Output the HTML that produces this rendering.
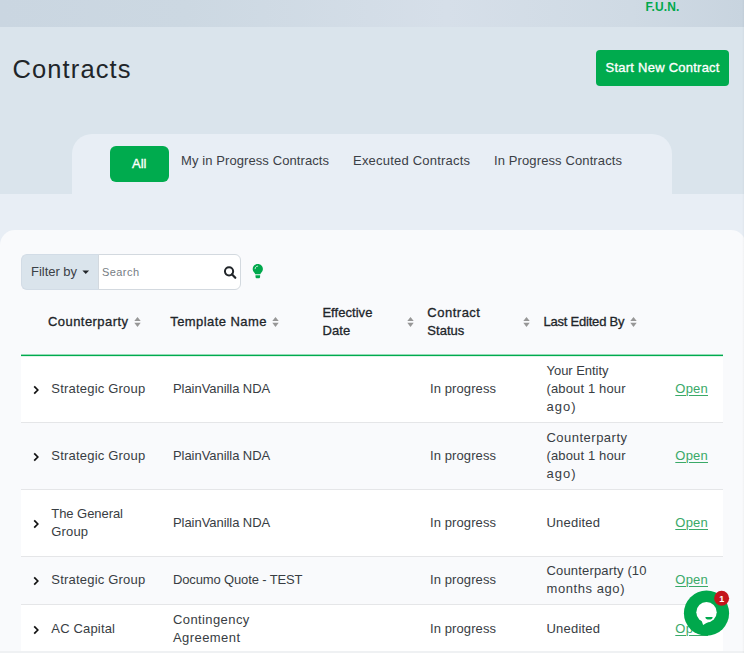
<!DOCTYPE html>
<html>
<head>
<meta charset="utf-8">
<style>
*{box-sizing:border-box;margin:0;padding:0}
html,body{width:744px;height:653px;overflow:hidden}
body{font-family:"Liberation Sans",sans-serif;background:#e8eef5;color:#212529;position:relative}
.a{position:absolute}
.t{position:absolute;white-space:nowrap;line-height:18px;font-size:13px}
.topbar{left:0;top:0;width:744px;height:27px;background:linear-gradient(90deg,#cad6e1 0%,#ccd8e2 25%,#d6dfe9 60%,#cfdae4 85%,#c8d4df 100%)}
.hero{left:0;top:27px;width:744px;height:167px;background:#dae4ec}
.tabs{left:72px;top:134px;width:600px;height:60px;background:#e8eef5;border-radius:20px 20px 0 0}
.gbtn{background:#00ab4e}
.card{left:0;top:230px;width:746px;height:430px;background:#f9fafc;border-radius:15px 15px 0 0}
.filter{left:98px;top:254px;width:143px;height:36px;border:1px solid #d3d9df;border-radius:0 6px 6px 0;background:#fff}
.filterby{left:21px;top:254px;width:78px;height:36px;background:#dae4ec;border:1px solid #d2dce6;border-right-color:#d3d9df;border-radius:6px 0 0 6px}
.gline{left:21px;top:354px;width:702px;height:3px;background:linear-gradient(180deg,rgba(0,171,78,.4) 0,rgba(0,171,78,.4) 1px,#00ab4e 1px,#00ab4e 2px,rgba(0,171,78,.12) 2px,rgba(0,171,78,.12) 3px);z-index:2}
.row{left:21px;width:702px}
.rb{left:21px;width:702px;height:1px;background:#e5e6e8}
.td{color:#383d43}
.th{color:#212529;-webkit-text-stroke:.3px #212529}
.open{color:#3aa968;text-decoration:underline;text-decoration-thickness:1px;text-underline-offset:2px}
.title{font-size:25.5px;line-height:34px;color:#212529}
.btn{color:#fff;-webkit-text-stroke:.32px #fff}
.tab{color:#3b4046}
.fb{color:#3b4046}
.search{font-size:11px;line-height:14px;color:#767d84}
.fun{color:#00a84c;font-weight:700;font-size:12px}
.badge{z-index:6;font-size:9px;line-height:14px;color:#fff;font-weight:700}
.edge{left:742px;top:0;width:2px;height:653px;background:linear-gradient(90deg,rgba(0,0,0,0),rgba(0,0,0,.035));z-index:9}

</style>
</head>
<body>
<div class="a topbar"></div>
<div class="a hero"></div>
<div class="a gbtn" style="left:595.500px;top:50px;width:133.500px;height:36px;border-radius:4px"></div>
<div class="a tabs"></div>
<div class="a gbtn" style="left:110px;top:146px;width:59px;height:36px;border-radius:6px"></div>
<div class="a card"></div>
<div class="a filter"></div><div class="a filterby"></div>
<!-- caret -->
<svg class="a" style="left:82px;top:269.600px" width="8" height="5" viewBox="0 0 8 5"><path d="M0.400 0.500h6.700L3.750 4.100z" fill="#212529"/></svg>
<!-- search icon -->
<svg class="a" style="left:221px;top:263px" width="18" height="18" viewBox="0 0 18 18"><circle cx="8.05" cy="8.300" r="4.100" fill="none" stroke="#212529" stroke-width="2"/><path d="M11.100 11.400L14.300 14.800" stroke="#212529" stroke-width="2.200" stroke-linecap="round"/></svg>
<!-- bulb -->
<svg class="a" style="left:250px;top:262px" width="16" height="18" viewBox="0 0 16 18"><path d="M7.800 2C4.900 2 2.700 4.200 2.700 7c0 1.500.7 2.600 1.500 3.500.6.700 1 1.200 1.100 1.800h5c.1-.6.500-1.100 1.100-1.800.8-.9 1.500-2 1.500-3.500 0-2.800-2.200-5-5.100-5z" fill="#00a84c"/><path d="M5.500 13.200h4.600v1.500c0 .9-.7 1.600-1.600 1.600h-1.400c-.9 0-1.600-.7-1.600-1.600z" fill="#00a84c"/><path d="M5.100 6.700c0-1.400 1.100-2.600 2.600-2.600" fill="none" stroke="#d9f3e4" stroke-width=".9" stroke-linecap="round"/></svg>
<div class="a gline"></div>
<!-- rows -->
<div class="a row" style="top:356px;height:66px;background:#fff"></div>
<div class="a rb" style="top:422px"></div>
<div class="a row" style="top:423px;height:66px;background:#f9fafc"></div>
<div class="a rb" style="top:489px"></div>
<div class="a row" style="top:490px;height:66px;background:#fff"></div>
<div class="a rb" style="top:556px"></div>
<div class="a row" style="top:557px;height:47px;background:#f9fafc"></div>
<div class="a rb" style="top:604px"></div>
<div class="a row" style="top:605px;height:48px;background:#fff"></div>
<div class="a" style="left:0;top:651px;width:744px;height:2px;background:#eff1f3"></div>
<!-- sort icons -->
<svg class="a sort" style="left:134px;top:316.500px" width="7" height="11" viewBox="0 0 7 11"><path d="M3.500 0.100L6.700 4.100H0.300zM3.500 10L6.700 5.800H0.300z" fill="#979797"/></svg>
<svg class="a sort" style="left:272.400px;top:316.500px" width="7" height="11" viewBox="0 0 7 11"><path d="M3.500 0.100L6.700 4.100H0.300zM3.500 10L6.700 5.800H0.300z" fill="#979797"/></svg>
<svg class="a sort" style="left:407px;top:316.500px" width="7" height="11" viewBox="0 0 7 11"><path d="M3.500 0.100L6.700 4.100H0.300zM3.500 10L6.700 5.800H0.300z" fill="#979797"/></svg>
<svg class="a sort" style="left:523px;top:316.500px" width="7" height="11" viewBox="0 0 7 11"><path d="M3.500 0.100L6.700 4.100H0.300zM3.500 10L6.700 5.800H0.300z" fill="#979797"/></svg>
<svg class="a sort" style="left:630px;top:316.500px" width="7" height="11" viewBox="0 0 7 11"><path d="M3.500 0.100L6.700 4.100H0.300zM3.500 10L6.700 5.800H0.300z" fill="#979797"/></svg>
<!-- chevrons -->
<svg class="a" style="left:32px;top:385px" width="8" height="10" viewBox="0 0 8 10"><path d="M2.200 1.300L5.800 5L2.200 8.700" fill="none" stroke="#111" stroke-width="1.700"/></svg>
<svg class="a" style="left:32px;top:452px" width="8" height="10" viewBox="0 0 8 10"><path d="M2.200 1.300L5.800 5L2.200 8.700" fill="none" stroke="#111" stroke-width="1.700"/></svg>
<svg class="a" style="left:32px;top:519px" width="8" height="10" viewBox="0 0 8 10"><path d="M2.200 1.300L5.800 5L2.200 8.700" fill="none" stroke="#111" stroke-width="1.700"/></svg>
<svg class="a" style="left:32px;top:576px" width="8" height="10" viewBox="0 0 8 10"><path d="M2.200 1.300L5.800 5L2.200 8.700" fill="none" stroke="#111" stroke-width="1.700"/></svg>
<svg class="a" style="left:32px;top:625px" width="8" height="10" viewBox="0 0 8 10"><path d="M2.200 1.300L5.800 5L2.200 8.700" fill="none" stroke="#111" stroke-width="1.700"/></svg>
<!-- chat widget -->
<svg class="a" style="left:680px;top:586px;z-index:5" width="54" height="54" viewBox="0 0 54 54">
<circle cx="26.5" cy="27.2" r="22.6" fill="#00a84c"/>
<circle cx="26.5" cy="26.2" r="10.2" fill="#fff"/>
<path d="M21.5 34.200L23.100 39L28.500 35.800z" fill="#fff"/>
<path d="M25.400 30.900h7.200a3.600 2.700 0 0 1-7.200 0z" fill="#00a84c"/>
<circle cx="41.600" cy="12.300" r="7.500" fill="#c4151c"/>
</svg>
<div class="a edge"></div>

<span class="t th" style="left:48px;top:313px;letter-spacing:0.440px">Counterparty</span>
<span class="t th" style="left:170.2px;top:313px;letter-spacing:0.438px">Template Name</span>
<span class="t th" style="left:322.4px;top:304px;letter-spacing:0.047px">Effective</span>
<span class="t th" style="left:322.4px;top:322px;letter-spacing:0.144px">Date</span>
<span class="t th" style="left:427.3px;top:304px;letter-spacing:0.508px">Contract</span>
<span class="t th" style="left:427.3px;top:322px;letter-spacing:0.028px">Status</span>
<span class="t th" style="left:543.5px;top:313px;letter-spacing:-0.218px">Last Edited By</span>
<span class="t td" style="left:51.3px;top:380px;letter-spacing:0.204px">Strategic Group</span>
<span class="t td" style="left:173px;top:380px;letter-spacing:-0.055px">PlainVanilla NDA</span>
<span class="t td" style="left:430px;top:380px;letter-spacing:0.095px">In progress</span>
<span class="t td" style="left:546.5px;top:362px;letter-spacing:-0.041px">Your Entity</span>
<span class="t td" style="left:546.5px;top:380px;letter-spacing:0.138px">(about 1 hour</span>
<span class="t td" style="left:546.5px;top:398px;letter-spacing:0.990px">ago)</span>
<span class="t open" style="left:675.3px;top:380px;letter-spacing:0.229px">Open</span>
<span class="t td" style="left:51.3px;top:447px;letter-spacing:0.204px">Strategic Group</span>
<span class="t td" style="left:173px;top:447px;letter-spacing:-0.055px">PlainVanilla NDA</span>
<span class="t td" style="left:430px;top:447px;letter-spacing:0.095px">In progress</span>
<span class="t td" style="left:546.5px;top:429px;letter-spacing:0.486px">Counterparty</span>
<span class="t td" style="left:546.5px;top:447px;letter-spacing:0.138px">(about 1 hour</span>
<span class="t td" style="left:546.5px;top:465px;letter-spacing:0.990px">ago)</span>
<span class="t open" style="left:675.3px;top:447px;letter-spacing:0.229px">Open</span>
<span class="t td" style="left:51.3px;top:505px;letter-spacing:-0.057px">The General</span>
<span class="t td" style="left:51.3px;top:523px;letter-spacing:0.140px">Group</span>
<span class="t td" style="left:173px;top:514px;letter-spacing:-0.055px">PlainVanilla NDA</span>
<span class="t td" style="left:430px;top:514px;letter-spacing:0.095px">In progress</span>
<span class="t td" style="left:546.5px;top:514px;letter-spacing:0.208px">Unedited</span>
<span class="t open" style="left:675.3px;top:514px;letter-spacing:0.229px">Open</span>
<span class="t td" style="left:51.3px;top:571px;letter-spacing:0.204px">Strategic Group</span>
<span class="t td" style="left:173px;top:571px;letter-spacing:-0.138px">Documo Quote - TEST</span>
<span class="t td" style="left:430px;top:571px;letter-spacing:0.095px">In progress</span>
<span class="t td" style="left:546.5px;top:562px;letter-spacing:0.163px">Counterparty (10</span>
<span class="t td" style="left:546.5px;top:580px;letter-spacing:0.573px">months ago)</span>
<span class="t open" style="left:675.3px;top:571px;letter-spacing:0.229px">Open</span>
<span class="t td" style="left:51.3px;top:620px;letter-spacing:0.173px">AC Capital</span>
<span class="t td" style="left:173px;top:611px;letter-spacing:0.402px">Contingency</span>
<span class="t td" style="left:173px;top:629px;letter-spacing:0.426px">Agreement</span>
<span class="t td" style="left:430px;top:620px;letter-spacing:0.095px">In progress</span>
<span class="t td" style="left:546.5px;top:620px;letter-spacing:0.208px">Unedited</span>
<span class="t open" style="left:675.3px;top:620px;letter-spacing:0.229px">Open</span>
<span class="t title" style="left:12.5px;top:52.3px;letter-spacing:1.109px">Contracts</span>
<span class="t btn" style="left:605.5px;top:59px;letter-spacing:0.245px">Start New Contract</span>
<span class="t btn" style="left:132px;top:155px;letter-spacing:0.023px">All</span>
<span class="t tab" style="left:181px;top:152px;letter-spacing:0.090px">My in Progress Contracts</span>
<span class="t tab" style="left:353px;top:152px;letter-spacing:0.209px">Executed Contracts</span>
<span class="t tab" style="left:494px;top:152px;letter-spacing:0.114px">In Progress Contracts</span>
<span class="t fb" style="left:31px;top:263px;letter-spacing:-0.029px">Filter by</span>
<span class="t search" style="left:102px;top:265px;letter-spacing:0.428px">Search</span>
<span class="t fun" style="left:645.5px;top:-2.5px;letter-spacing:0.091px">F.U.N.</span>
<span class="t badge" style="left:719.3px;top:591.5px;letter-spacing:0.000px">1</span>
</body>
</html>
